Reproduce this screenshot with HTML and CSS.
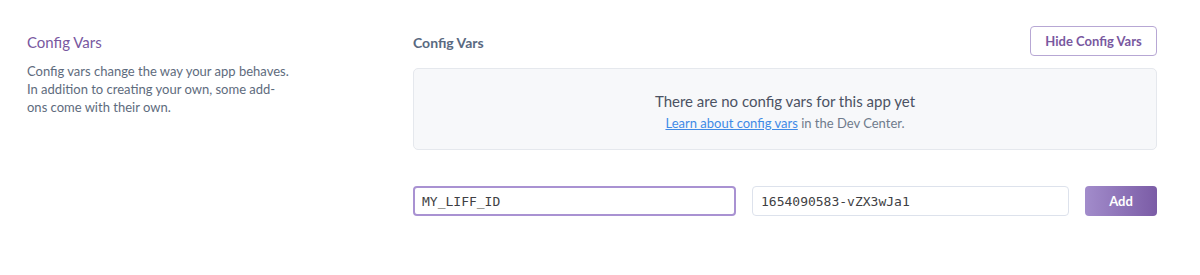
FILE: index.html
```html
<!DOCTYPE html>
<html lang="en">
<head>
    <meta charset="UTF-8">
    <meta name="viewport" content="width=device-width, initial-scale=1.0">
    <title>Settings - Config Vars</title>
    <link rel="stylesheet" href="styles.css">
</head>
<body>
    <section class="settings-row">
        <div class="settings-intro">
            <h3 class="intro-title">Config Vars</h3>
            <p class="intro-text">Config vars change the way your app behaves. In addition to creating your own, some add-ons come with their own.</p>
        </div>

        <div class="settings-main">
            <div class="main-header">
                <h4 class="main-title">Config Vars</h4>
                <button class="btn btn-secondary">Hide Config Vars</button>
            </div>

            <div class="empty-box">
                <p class="empty-title">There are no config vars for this app yet</p>
                <p class="empty-sub"><a href="#">Learn about config vars</a> in the Dev Center.</p>
            </div>

            <form class="var-form">
                <input type="text" class="var-input var-key is-focused" value="MY_LIFF_ID">
                <input type="text" class="var-input" value="1654090583-vZX3wJa1">
                <button type="button" class="btn btn-primary">Add</button>
            </form>
        </div>
    </section>
</body>
</html>
```
FILE: styles.css
```css
body {
    margin: 0;
    padding: 0;
    background-color: #ffffff;
    font-family: Lato, "Open Sans", sans-serif;
    color: #596981;
}

.settings-row {
    display: grid;
    grid-template-columns: 386px 1fr;
    padding: 26px 43px 0 27px;
}

.intro-title {
    margin: 0;
    padding-top: 6px;
    font-size: 15px;
    font-weight: normal;
    line-height: 20px;
    color: #79589f;
}

.intro-text {
    margin: 10px 0 0;
    width: 262px;
    font-size: 13px;
    line-height: 18px;
    color: #5e6b7d;
}

.main-header {
    display: flex;
    justify-content: space-between;
    align-items: center;
    height: 30px;
}

.main-title {
    margin: 0;
    padding-top: 3px;
    font-size: 14px;
    font-weight: bold;
    color: #596981;
}

.btn {
    font-family: Lato, "Open Sans", sans-serif;
    font-size: 13px;
    font-weight: bold;
    height: 30px;
    border-radius: 4px;
    cursor: pointer;
}

.btn-secondary {
    padding: 0 13px;
    width: 127px;
    background-color: #ffffff;
    border: 1px solid #b7a7d4;
    color: #79589f;
}

.btn-primary {
    width: 72px;
    flex: none;
    border: none;
    color: #ffffff;
    background: linear-gradient(to right, #a28ccb, #7b5ca6);
}

.empty-box {
    margin-top: 12px;
    height: 80px;
    background-color: #f7f8fa;
    border: 1px solid #e5e8ed;
    border-radius: 5px;
    text-align: center;
}

.empty-title {
    margin: 22px 0 0;
    font-size: 15px;
    line-height: 20px;
    color: #4b5263;
}

.empty-sub {
    margin: 3px 0 0;
    font-size: 13px;
    line-height: 18px;
    color: #6f7b8c;
}

.empty-sub a {
    color: #3f8ae6;
}

.var-form {
    display: flex;
    gap: 16px;
    margin-top: 36px;
}

.var-input {
    box-sizing: border-box;
    height: 30px;
    flex: 1 1 0;
    min-width: 0;
    padding: 0 8px;
    font-family: "DejaVu Sans Mono", monospace;
    font-size: 13px;
    line-height: 20px;
    color: #3f3f44;
    background-color: #ffffff;
    border: 1px solid #dde2ec;
    border-radius: 4px;
}

.var-key {
    flex: 0 0 323px;
}

.var-input.is-focused {
    border: 2px solid #a992d2;
    padding: 0 7px;
}
```
